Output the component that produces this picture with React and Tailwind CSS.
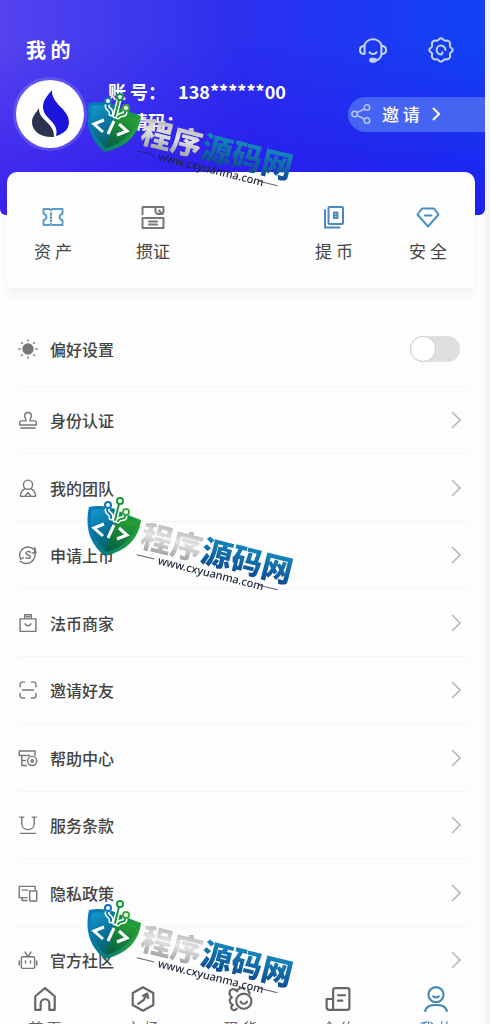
import React, { useState } from 'react';

const Icon = ({ size = 'w-5 h-5', children, width = 1.7 }) => (
  <svg
    viewBox="0 0 24 24"
    className={`${size} shrink-0`}
    fill="none"
    stroke="currentColor"
    strokeWidth={width}
    strokeLinecap="round"
    strokeLinejoin="round"
    aria-hidden="true"
  >
    {children}
  </svg>
);

const Chevron = () => (
  <svg viewBox="0 0 10 18" className="w-[10px] h-[18px] shrink-0" fill="none" stroke="currentColor" strokeWidth="1.6" aria-hidden="true">
    <path d="M1 1l8 8-8 8" />
  </svg>
);

const icons = {
  headset: (
    <>
      <path d="M4.5 8.5a7.8 7.8 0 0 1 15 0M19.5 15.5c-.8 3-2.500 5-5 5.500" />
      <path d="M4.800 8.500C1.800 8.500.8 10 .8 12s1 3.500 4 3.500zM19.200 8.500c3 0 4 1.500 4 3.500s-1 3.500-4 3.500z" />
      <path d="M9 14c1.500 2 4.500 2 6 0" />
      <rect x="9.500" y="19.500" width="5" height="2.500" rx="1.200" fill="currentColor" />
    </>
  ),
  gear: (
    <>
      <path d="M8 4c1.800.3 2.300-2 4-2s2.200 2.300 4 2c1.800-.3 3.600.5 3.800 2.300.2 1.500-.8 2 .2 3.200 1.200 1.200 2 1.300 2 2.500s-.8 1.300-2 2.500c-1 1.200 0 1.700-.2 3.200-.2 1.800-2 2.600-3.800 2.300-1.800-.3-2.300 2-4 2s-2.200-2.300-4-2c-1.800.3-3.600-.5-3.800-2.300-.2-1.500.8-2-.2-3.200-1.200-1.200-2-1.300-2-2.500s.8-1.300 2-2.500c1-1.200 0-1.700.2-3.200C4.400 4.500 6.200 3.700 8 4z" />
      <path d="M15.800 12a3.800 3.800 0 1 0-3.800 3.800c.8 0 1.200-.6 1.200-1.800" />
    </>
  ),
  share: (
    <>
      <circle cx="5" cy="12" r="3" />
      <circle cx="18.500" cy="5" r="3" />
      <circle cx="18.500" cy="19" r="3" />
      <path d="M7.700 10.500l8-4M7.700 13.500l8 4" />
    </>
  ),
  ticket: (
    <>
      <path d="M2.500 4h6c.8 1.500 1.800 1.500 2.600 0h10.400v4.500c-2 1-3 2-3 3.500s1 2.500 3 3.500V20H11.100c-.8-1.500-1.800-1.500-2.600 0h-6v-4.500c2-1 3-2 3-3.500s-1-2.500-3-3.500z" />
      <path d="M10 8v2M10 12v1.500M10 15.500v1" />
    </>
  ),
  voucher: (
    <>
      <path d="M1.500 9.500V2h21v5l-1 2h-5l-2-2V2M18 5.500l2 2" />
      <rect x="1.500" y="13" width="21" height="10" />
      <path d="M8 16.500h8M8 19.500h8" />
    </>
  ),
  withdraw: (
    <>
      <rect x="6.500" y="2" width="14.500" height="17" rx="1" />
      <path d="M3 5v17.500h14.500M12 7.500h3.500v2.700H12zM12 10.200h3.500V13H12z" />
    </>
  ),
  diamond: (
    <>
      <path d="M6 3.500h12l4.500 6L12 21.500 1.500 9.500z" />
      <path d="M9 10.500h6.500" />
    </>
  ),
  sun: (
    <>
      <circle cx="12" cy="12" r="6" fill="currentColor" />
      <path d="M12 1v1.500M12 21.500V23M1 12h1.500M21.500 12H23M4.200 4.200l1 1M18.800 18.800l1 1M4.200 19.800l1-1M18.800 5.200l1-1" />
    </>
  ),
  stamp: (
    <>
      <path d="M9.500 13c.5-2-1.500-3.500-1.500-6a4 4 0 0 1 8 0c0 2.500-2 4-1.500 6H20c1.500 0 2 1 2 2v3H2v-3c0-1 .5-2 2-2z" />
      <path d="M3.500 21.500h17" />
    </>
  ),
  person: (
    <>
      <circle cx="12" cy="8" r="5.500" />
      <path d="M8 13c-3 1.500-5 4.500-5 9h18c0-4.500-2-7.500-5-9M8.500 21.500l3.500-4 3.500 4" />
    </>
  ),
  exchange: (
    <>
      <path d="M21.500 9.500A10 10 0 0 0 4 6.500C1.500 10 1.500 14 3.500 17l3-2M2.500 19.500c5 4 12.500 3.500 16-2 2-3 2.500-6 1.500-9l-3 1.500M20 3l1.500 6" />
      <path d="M15 8.500c-2.500-1.500-5.500-.5-5.500 1.500 0 2.500 5.500 1.500 5.500 4 0 2-3 2.500-5.500 1.200" />
    </>
  ),
  bag: (
    <>
      <path d="M2.500 7h19v15h-19zM8 7V2h8v5M10 4.500h4" />
      <path d="M8.500 13c1.500 3 5.500 3 7 0" />
    </>
  ),
  scan: <path d="M2.500 8V5c0-1.500 1-2.500 2.500-2.500h3M16 2.500h3c1.500 0 2.500 1 2.500 2.500v3M21.500 16v3c0 1.500-1 2.500-2.500 2.500h-3M8 21.500H5c-1.500 0-2.500-1-2.500-2.500v-3M5.500 12h13" />,
  help: (
    <>
      <path d="M1.500 9V3.500h19V9M1.500 9H14M4.500 9v12H10M4.500 15H9" />
      <circle cx="17" cy="15.500" r="5.500" />
      <circle cx="17" cy="15.500" r="1.500" />
    </>
  ),
  terms: <path d="M2 2.500h5M17 2.500h5M4.500 2.500V10c0 10 15 10 15 0V2.500M3 22h18" />,
  privacy: (
    <>
      <path d="M11 17.500H1.500V4h19v4M5 8.500h7M5 17.500v3.500h6" />
      <rect x="14" y="9.500" width="8.500" height="12" />
    </>
  ),
  robot: (
    <>
      <rect x="4" y="8" width="16" height="14" rx="1.500" />
      <path d="M8.500 2.500L12 8l3.500-5.500M1.500 13v5M22.500 13v5M9 13v2.500M15 13v2.500" />
    </>
  ),
  home: <path d="M8 22H3V9.500L12 2l9 7.500V22h-5v-6c0-5-8-5-8 0z" />,
  market: (
    <>
      <path d="M12 1.200l9.500 5.300v11L12 22.800l-9.500-5.300v-11z" />
      <path d="M7.500 16.500l5-3.500 3.500-6M12 9l4-2 .8 4" />
    </>
  ),
  spot: (
    <>
      <path d="M9 21c-1.500 2-4.500 1.500-5-.5-.4-1.500.5-2.500 1.500-3C2 16 1.500 12.500 4.500 10.500 1 8 2 3.500 5 3c2-.3 3.500.5 4.200 2C10.500 2 14 .5 16 3" />
      <circle cx="15.500" cy="14" r="7" />
      <path d="M12.500 14.500c1.500 2.500 4.500 2.500 6 0M19.500 4l1.500 3" />
    </>
  ),
  contract: (
    <>
      <path d="M7.500 22V4c0-1.500.5-2 2-2h11c1.500 0 2 .5 2 2v16c0 1.500-.5 2-2 2H4c-1.500 0-2.500-1-2.500-2.500V12h6" />
      <path d="M12 8.500h6.500M12 13.500h4" />
    </>
  ),
  me: (
    <>
      <circle cx="12" cy="8" r="7" />
      <path d="M9.500 9.500c1.200 1.500 3.800 1.500 5 0M2 23c1.500-5 5-5.500 10-5.500s8.500.5 10 5.500" />
    </>
  ),
};

const actions = [
  { icon: 'ticket', label: '资 产', color: 'text-[#5b9dc6]' },
  { icon: 'voucher', label: '掼证', color: 'text-[#777777]' },
  null,
  { icon: 'withdraw', label: '提 币', color: 'text-[#4c88c2]' },
  { icon: 'diamond', label: '安 全', color: 'text-[#4a91c4]' },
];

const rows = [
  { icon: 'stamp', label: '身份认证' },
  { icon: 'person', label: '我的团队' },
  { icon: 'exchange', label: '申请上币' },
  { icon: 'bag', label: '法币商家' },
  { icon: 'scan', label: '邀请好友' },
  { icon: 'help', label: '帮助中心' },
  { icon: 'terms', label: '服务条款' },
  { icon: 'privacy', label: '隐私政策' },
  { icon: 'robot', label: '官方社区' },
];

const tabs = [
  { icon: 'home', label: '首 页' },
  { icon: 'market', label: '市 场' },
  { icon: 'spot', label: '现 货' },
  { icon: 'contract', label: '合 约' },
  { icon: 'me', label: '我 的', active: true },
];

const Avatar = () => (
  <div className="w-[68px] h-[68px] shrink-0 rounded-full bg-white ring-3 ring-white/15">
    <svg viewBox="0 0 68 68" className="w-full h-full" aria-hidden="true">
      <path d="M36 10c-1 14 17 19 17 32 0 8-6 12-13 14 4-14-13-17-13-29 0-7 5-12 9-17z" fill="#1a14dc" />
      <path d="M23 28c-1 12 16 15 15 29-12 1-22-5-22-15 0-6 4-9 7-14z" fill="#2b3350" />
    </svg>
  </div>
);

const Header = () => (
  <header className="rounded-b-md bg-[linear-gradient(to_bottom,transparent_20%,rgba(40,10,235,0.6)),linear-gradient(to_right,#5444ee,#2b2fee_50%,#1042f4)] pt-9 pb-[67px] text-white">
    <div className="flex items-center justify-between h-7 pl-[26px] pr-[30px]">
      <h1 className="text-[20px] font-bold leading-7">我 的</h1>
      <div className="flex gap-10 text-[#c3d6ff]">
        <button aria-label="客服"><Icon size="w-7 h-7">{icons.headset}</Icon></button>
        <button aria-label="设置"><Icon size="w-7 h-7">{icons.gear}</Icon></button>
      </div>
    </div>
    <div className="flex items-center mt-4 pl-4">
      <Avatar />
      <div className="self-start -mt-1 ml-6 text-[18px] font-bold leading-[30px]">
        <p className="flex gap-3"><span>账 号：</span><span>138******00</span></p>
        <p>邀 请码：</p>
      </div>
      <button className="flex items-center ml-auto h-[35px] w-[137px] rounded-l-full bg-[#4664f2] pl-[2px] text-[17px] font-medium">
        <span className="text-[#b4c4fc]"><Icon size="w-[22px] h-[22px]">{icons.share}</Icon></span>
        <span className="ml-[10px] mr-3">邀 请</span>
        <svg viewBox="0 0 8 14" className="w-2 h-[14px]" fill="none" stroke="currentColor" strokeWidth="2" aria-hidden="true">
          <path d="M1 1l6 6-6 6" />
        </svg>
      </button>
    </div>
  </header>
);

const QuickActions = () => (
  <section className="grid grid-cols-[92fr_108fr_80fr_94fr_94fr] -mt-[43px] ml-[7px] mr-[10px] rounded-t-[10px] rounded-b-md bg-[#fdfdfd] pt-[31px] pb-[25px] shadow-[0_8px_10px_rgba(0,0,0,0.04)]">
    {actions.map((item, i) =>
      item ? (
        <button key={item.label} className="flex flex-col items-center gap-2 text-[17px] leading-6 text-[#444444]">
          <span className={`flex h-7 items-center ${item.color}`}>
            <Icon size="w-6 h-6" width={2}>{icons[item.icon]}</Icon>
          </span>
          {item.label}
        </button>
      ) : (
        <span key={i} />
      )
    )}
  </section>
);

const PreferenceRow = () => {
  const [on, setOn] = useState(false);

  return (
    <label className="flex items-center gap-3 h-[76px] border-b border-[#f5f5f5]">
      <Icon>{icons.sun}</Icon>
      <span className="text-[#444444]">偏好设置</span>
      <input
        type="checkbox"
        checked={on}
        onChange={() => setOn(!on)}
        className="ml-auto mr-[9px] h-[26px] w-[50px] appearance-none rounded-full bg-[#dfdfdf] before:block before:h-[26px] before:w-[26px] before:rounded-full before:border before:border-[#cfcfcf] before:bg-white checked:bg-blue-500 checked:before:ml-6"
      />
    </label>
  );
};

const MenuRow = ({ icon, label }) => (
  <li className="h-[67px] even:h-[68px] border-b border-[#f5f5f5]">
    <a href="#" className="flex items-center gap-3 h-full">
      <Icon>{icons[icon]}</Icon>
      <span className="text-[#444444]">{label}</span>
      <span className="ml-auto mr-2 text-[#b8b8b8]"><Chevron /></span>
    </a>
  </li>
);

const TabBar = () => (
  <nav className="grid grid-cols-5 h-[41px] shrink-0 -ml-1 bg-[#fdfdfd] pt-[3px]">
    {tabs.map((tab) => (
      <a
        key={tab.label}
        href="#"
        className={`flex flex-col items-center gap-1 text-[15px] leading-6 ${tab.active ? 'text-[#4389b4]' : 'text-[#666666]'}`}
      >
        <Icon size="w-[26px] h-[26px]" width={2}>{icons[tab.icon]}</Icon>
        {tab.label}
      </a>
    ))}
  </nav>
);

const Brand = ({ id, className }) => (
  <svg viewBox="0 0 220 105" className={`absolute w-[220px] h-[105px] pointer-events-none ${className}`}>
    <defs>
      <linearGradient id={`${id}-shield`} x1="0" y1="0.3" x2="1" y2="0.5">
        <stop offset="0" stopColor="#0879c4" />
        <stop offset="0.45" stopColor="#087f78" />
        <stop offset="1" stopColor="#27a52d" />
      </linearGradient>
      <linearGradient id={`${id}-inner`} x1="0" y1="0" x2="0.6" y2="1">
        <stop offset="0" stopColor="#159bd0" />
        <stop offset="0.5" stopColor="#08709a" />
        <stop offset="1" stopColor="#07624a" />
      </linearGradient>
      <linearGradient id={`${id}-green`} x1="0.6" y1="0" x2="0.2" y2="1">
        <stop offset="0" stopColor="#2aa52e" />
        <stop offset="1" stopColor="#075f45" />
      </linearGradient>
      <linearGradient id={`${id}-silver`} x1="0" y1="0" x2="0" y2="1">
        <stop offset="0" stopColor="#9c9c9c" />
        <stop offset="0.5" stopColor="#e4e4e4" />
        <stop offset="1" stopColor="#8c8c8c" />
      </linearGradient>
      <linearGradient id={`${id}-blue`} x1="0" y1="0" x2="0" y2="1">
        <stop offset="0.2" stopColor="#1689bd" />
        <stop offset="1" stopColor="#0c418c" />
      </linearGradient>
    </defs>
    <path d="M9 17c9-2 18-1 26 2 10 5 18 8 26 11-2 18-14 31-36 36C12 56 4 40 9 17z" fill={`url(#${id}-shield)`} />
    <path d="M12 20c8-2 16 0 23 3 8 4 15 7 22 9-3 14-13 25-31 30C15 52 8 38 12 20z" fill={`url(#${id}-inner)`} />
    <path d="M37 24c7 4 13 6 20 8-3 14-13 25-31 30z" fill={`url(#${id}-green)`} />
    <g fill="none" strokeLinecap="round">
      <path d="M28 18c-4 5 5 5 3 10M39 14l-4 16M45 25c1 6-5 2-7 6" stroke="#ffffff" strokeWidth="5" />
      <path d="M28 18c-4 5 5 5 3 10" stroke="#1472bd" strokeWidth="2" />
      <path d="M39 14l-4 16M45 25c1 6-5 2-7 6" stroke="#16943a" strokeWidth="2" />
      <circle cx="28" cy="15" r="3" fill="#ffffff" stroke="#1472bd" strokeWidth="2" />
      <circle cx="40" cy="11" r="3" fill="#ffffff" stroke="#16943a" strokeWidth="2" />
      <circle cx="46" cy="22" r="3" fill="#ffffff" stroke="#3aaa35" strokeWidth="2" />
    </g>
    <path d="M24 34l-10 4 9 8M34 35l-6 13M39 38l8 7-10 4" fill="none" stroke="#ffffff" strokeWidth="3" />
    <g transform="translate(59 56) rotate(14)">
      <text fontSize="31" fontWeight="900" fontFamily="'Noto Sans CJK SC', sans-serif">
        <tspan fill={`url(#${id}-silver)`}>程序</tspan>
        <tspan fill={`url(#${id}-blue)`}>源码网</tspan>
      </text>
      <text x="22" y="13" fontSize="11" fontWeight="500" fill="#20283c" fontFamily="'Noto Sans', sans-serif">www.cxyuanma.com</text>
      <path d="M0 9h18M126 9h19" stroke="#20283c" strokeWidth="1" opacity="0.7" />
    </g>
  </svg>
);

export default function App() {
  return (
    <div className="relative flex flex-col h-screen overflow-hidden bg-[#f4f5f7] pr-[5px] font-['Noto_Sans_CJK_SC',sans-serif]">
      <main className="flex-1 min-h-0 overflow-y-auto [scrollbar-width:none] bg-[#fdfdfd]">
        <Header />
        <QuickActions />
        <section className="mt-[23px] pl-[18px] pr-4 text-[16px] font-medium text-[#777777]">
          <PreferenceRow />
          <ul>
            {rows.map((row) => (
              <MenuRow key={row.label} {...row} />
            ))}
          </ul>
        </section>
      </main>
      <TabBar />
      <Brand id="brand-top" className="left-20 top-[86px]" />
      <Brand id="brand-middle" className="left-20 top-[490px]" />
      <Brand id="brand-bottom" className="left-20 top-[893px]" />
    </div>
  );
}
